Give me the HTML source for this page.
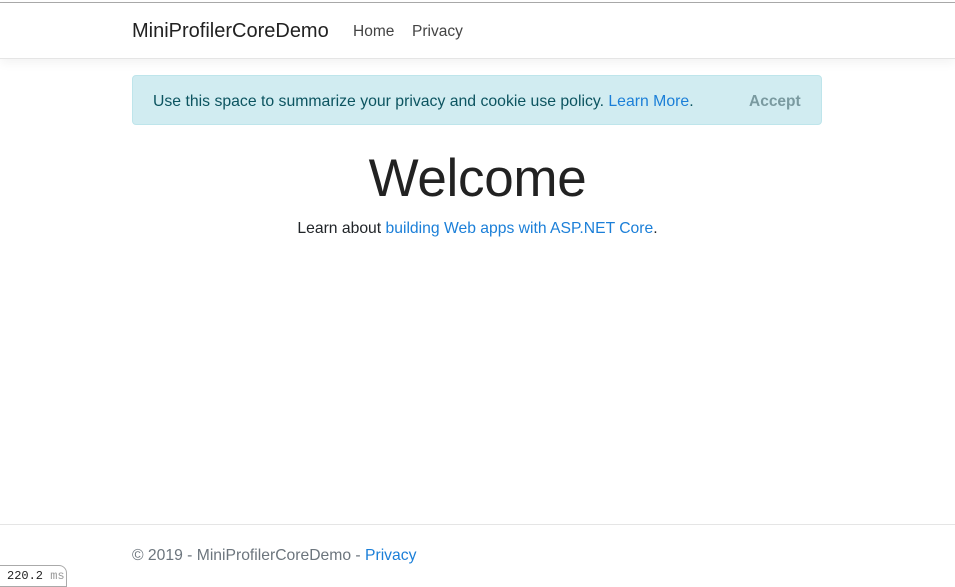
<!DOCTYPE html>
<html><head><style>
body{margin:0;width:955px;height:584px;position:relative;overflow:hidden;background:#fff;font-family:"Liberation Sans",sans-serif;color:#212529}
.top{position:absolute;top:2px;left:0;width:955px;height:1px;background:#aaa}
.nav{position:absolute;top:3px;left:0;width:955px;height:55px;border-bottom:1px solid #e5e5e5;box-shadow:0 4px 10px rgba(0,0,0,.05)}
.brand{position:absolute;left:132px;top:17px;font-size:20px;color:#222}
.nl{position:absolute;top:20px;font-size:15.5px;color:#444}
.alert{position:absolute;left:132px;top:75px;width:688px;height:48px;background:#d1ecf1;border:1px solid #bee5eb;border-radius:4px;color:#0c5460;font-size:15.8px}
.alert .t{position:absolute;left:20px;top:17px;white-space:nowrap}
a{color:#1b7fd8;text-decoration:none}
.acc{position:absolute;left:616px;top:17px;font-weight:bold;color:#7a9aa0;font-size:15.5px}
h1{position:absolute;left:0;width:955px;text-align:center;top:148px;margin:0;font-size:53px;font-weight:normal;color:#222;letter-spacing:-0.3px}
.lead{position:absolute;left:0;width:955px;text-align:center;top:220px;font-size:15.7px}
.foot{position:absolute;left:0;top:524px;width:955px;border-top:1px solid #e5e5e5}
.ft{position:absolute;left:132px;top:547px;font-size:15.7px;color:#6c757d}
.mp{position:absolute;left:-1px;top:565px;width:68px;height:22px;border:1px solid #aaa;border-radius:0 8px 0 0;background:#fff;font-family:"Liberation Mono",monospace;font-size:12px;line-height:20px;padding-left:7px;box-sizing:border-box;color:#222}
.mp span{color:#999}
</style></head><body>
<div class="top"></div>
<div class="nav"><div class="brand">MiniProfilerCoreDemo</div><div class="nl" style="left:353px">Home</div><div class="nl" style="left:412px">Privacy</div></div>
<div class="alert"><div class="t">Use this space to summarize your privacy and cookie use policy. <a>Learn More</a>.</div><div class="acc">Accept</div></div>
<h1>Welcome</h1>
<div class="lead">Learn about <a>building Web apps with ASP.NET Core</a>.</div>
<div class="foot"></div>
<div class="ft">© 2019 - MiniProfilerCoreDemo - <a>Privacy</a></div>
<div class="mp">220.2 <span>ms</span></div>
</body></html>
